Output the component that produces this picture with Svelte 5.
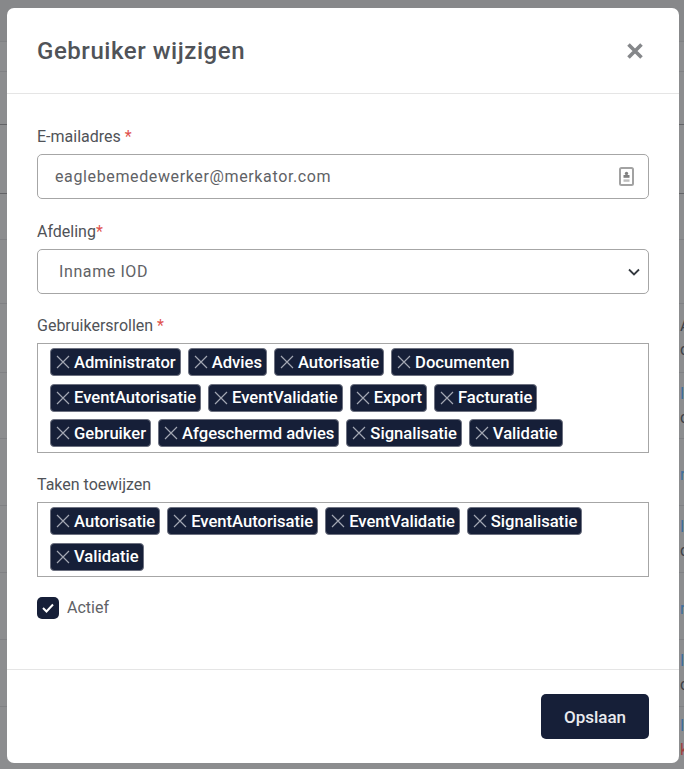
<script>
  const roles = ['Administrator', 'Advies', 'Autorisatie', 'Documenten', 'EventAutorisatie', 'EventValidatie', 'Export', 'Facturatie', 'Gebruiker', 'Afgeschermd advies', 'Signalisatie', 'Validatie'];
  const tasks = ['Autorisatie', 'EventAutorisatie', 'EventValidatie', 'Signalisatie', 'Validatie'];

  // rows of the table behind the overlay; only their right edge stays visible
  const rows = [
    { h: 30 }, { h: 53 }, { h: 69, dark: true }, { h: 46, dark: true }, { h: 64 },
    { h: 69, a: 'A', ac: '#3c4148', b: 'c' },
    { h: 66, a: 'I', ac: '#3d6f9e', b: 'c' },
    { h: 67, b: 'r', bc: '#3d6f9e' },
    { h: 67, a: 'I', ac: '#3d6f9e', b: 'c' },
    { h: 67, b: 'r', bc: '#3d6f9e' },
    { h: 67, a: 'I', ac: '#3d6f9e', b: 'c' },
    { h: 63, a: 'I', ac: '#3d6f9e', b: 'k', bc: '#a04040' }
  ];
</script>

{#snippet tagList(items)}
  <div class="tags">
    {#each items as item}
      <span class="tag">
        <svg width="14" height="14" viewBox="0 0 14 14" fill="none"><path d="M1 1L13 13M13 1L1 13" stroke="#a3a7b3" stroke-width="1.2"/></svg>
        {item}
      </span>
    {/each}
  </div>
{/snippet}

<div class="page">
  <div class="table">
    <div class="top"></div>
    {#each rows as row}
      <div class="row" class:dark={row.dark} style="height: {row.h}px">
        <span style="color: {row.ac}">{row.a ?? ''}</span>
        <span style="color: {row.bc}">{row.b ?? ''}</span>
      </div>
    {/each}
  </div>

  <div class="backdrop">
    <div class="modal">
      <header class="head">
        <h1>Gebruiker wijzigen</h1>
        <svg class="close" width="18" height="18" viewBox="0 0 18 18" fill="none"><path d="M2.5 2.5L15.5 15.5M15.5 2.5L2.5 15.5" stroke="#85878a" stroke-width="3.6"/></svg>
      </header>

      <div class="body">
        <div class="label">E-mailadres <span class="req">*</span></div>
        <div class="control email">
          <span>eaglebemedewerker@merkator.com</span>
          <svg width="15" height="19" viewBox="0 0 15 19" fill="none">
            <rect x="1" y="1" width="13" height="17" rx="1.5" stroke="#a2a2a2" stroke-width="2"/>
            <circle cx="7.5" cy="6.4" r="1.7" fill="#808080"/>
            <rect x="4.5" y="8" width="6" height="2.8" fill="#808080"/>
            <rect x="4.5" y="12.4" width="6" height="2.4" fill="#bdbdbd"/>
          </svg>
        </div>

        <div class="label second">Afdeling<span class="req">*</span></div>
        <div class="control">
          <span>Inname IOD</span>
          <svg class="chev" width="12" height="8" viewBox="0 0 12 8" fill="none"><path d="M1 1.5L6 6.5L11 1.5" stroke="#343a40" stroke-width="1.8"/></svg>
        </div>

        <div class="label third">Gebruikersrollen <span class="req">*</span></div>
        {@render tagList(roles)}

        <div class="label fourth">Taken toewijzen</div>
        {@render tagList(tasks)}

        <label class="check">
          <span class="box">
            <svg width="12" height="10" viewBox="0 0 12 10" fill="none"><path d="M1 5L4.5 8.5L11 1.5" stroke="#fff" stroke-width="2"/></svg>
          </span>
          Actief
        </label>
      </div>

      <footer class="foot">
        <button class="save">Opslaan</button>
      </footer>
    </div>
  </div>
</div>

<style>
  :global(body) {
    font-family: Roboto, sans-serif;
  }

  .page {
    position: relative;
    height: 769px;
    overflow: hidden;
    background: #8c8d8f;
  }

  .top {
    height: 41px;
    background: #87888a;
  }

  .row {
    box-sizing: border-box;
    border-top: 1px solid #808184;
    padding-left: 680px;
    display: flex;
    flex-direction: column;
    justify-content: center;
    gap: 6px;
    font-size: 16px;
    line-height: 18px;
    white-space: nowrap;
    color: #3c4148;
  }

  .row.dark {
    border-top-color: #626366;
  }

  .backdrop {
    position: absolute;
    inset: 0;
    box-sizing: border-box;
    padding: 8px 5px 6px 7px;
  }

  .modal {
    height: 755px;
    background: #fff;
    border-radius: 7px;
    display: flex;
    flex-direction: column;
    color: #505358;
  }

  .head {
    height: 86px;
    box-sizing: border-box;
    border-bottom: 1px solid #e5e5e5;
    padding: 0 35px 0 30px;
    display: flex;
    align-items: center;
    justify-content: space-between;
  }

  h1 {
    margin: 0;
    font-size: 24px;
    font-weight: 500;
    letter-spacing: 0.55px;
  }

  .body {
    flex: 1;
    padding: 33px 30px 0;
  }

  .label {
    font-size: 16px;
    line-height: 19px;
    margin-bottom: 8px;
  }

  .second { margin-top: 23px; }
  .third { margin-top: 22px; }
  .fourth { margin-top: 22px; }

  .req { color: #e0524d; }

  .control {
    height: 45px;
    box-sizing: border-box;
    border: 1px solid #a6a6a6;
    border-radius: 5px;
    padding: 0 8px 0 21px;
    display: flex;
    align-items: center;
    justify-content: space-between;
    font-size: 16px;
    letter-spacing: 0.6px;
    color: #5f6266;
  }

  .email {
    padding: 0 14px 0 17px;
    letter-spacing: 0.63px;
  }

  .tags {
    border: 1px solid #a6a6a6;
    padding: 4px 12px 5px;
    display: flex;
    flex-wrap: wrap;
    gap: 7.5px 7px;
  }

  .tag {
    height: 28px;
    box-sizing: border-box;
    background: #161f38;
    color: #fff;
    border: 1px solid #6d7180;
    border-radius: 4px;
    padding: 0 4px 0 5px;
    display: flex;
    align-items: center;
    gap: 4px;
    font-size: 16.6px;
    font-weight: 500;
  }

  .check {
    display: flex;
    align-items: center;
    gap: 8px;
    margin-top: 20px;
    font-size: 16px;
    color: #5f6266;
  }

  .box {
    width: 22px;
    height: 22px;
    background: #161f38;
    border-radius: 5px;
    display: flex;
    align-items: center;
    justify-content: center;
  }

  .foot {
    height: 94px;
    box-sizing: border-box;
    border-top: 1px solid #e5e5e5;
    padding: 24px 30px 0;
    display: flex;
    justify-content: flex-end;
    align-items: flex-start;
  }

  .save {
    width: 108px;
    height: 45px;
    background: #161f38;
    color: #e9eaee;
    border: none;
    border-radius: 5px;
    font-family: inherit;
    font-size: 17px;
    font-weight: 500;
  }
</style>
